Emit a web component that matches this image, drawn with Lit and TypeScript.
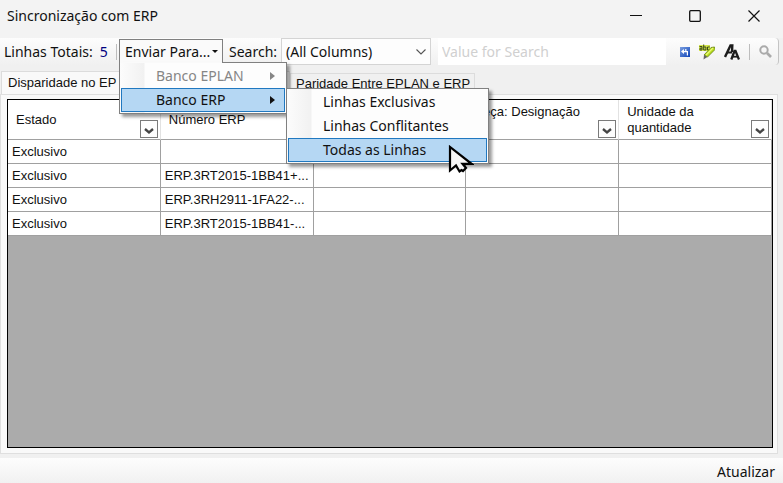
import { LitElement, css, html, svg } from "lit";
import { customElement, state } from "lit/decorators.js";

interface Column {
  label: string;
  top?: boolean;
}

const COLUMNS: Column[] = [
  { label: "Estado" },
  { label: "Número ERP" },
  { label: "" },
  { label: "Peça: Designação", top: true },
  { label: "Unidade da quantidade" },
];

const ROWS: string[][] = [
  ["Exclusivo", "", "", "", ""],
  ["Exclusivo", "ERP.3RT2015-1BB41+...", "", "", ""],
  ["Exclusivo", "ERP.3RH2911-1FA22-...", "", "", ""],
  ["Exclusivo", "ERP.3RT2015-1BB41-...", "", "", ""],
];

const SUBMENU = ["Linhas Exclusivas", "Linhas Conflitantes", "Todas as Linhas"];

const minimizeIcon = svg`<svg width="12" height="12" viewBox="0 0 12 12"><path d="M0 5.5h12" stroke="#111" fill="none"/></svg>`;
const maximizeIcon = svg`<svg width="12" height="12" viewBox="0 0 12 12"><rect x=".7" y=".7" width="10.6" height="10.6" rx="1" stroke="#111" stroke-width="1.3" fill="none"/></svg>`;
const closeIcon = svg`<svg width="12" height="12" viewBox="0 0 12 12"><path d="M.5.5l11 11M11.5.5l-11 11" stroke="#111" stroke-width="1.2" fill="none"/></svg>`;
const chevronIcon = svg`<svg width="10" height="6" viewBox="0 0 10 6"><path d="M1 1l4 3.4L9 1" stroke="#444" stroke-width="2.3" fill="none"/></svg>`;
const comboIcon = svg`<svg class="combo-arrow" width="10" height="6" viewBox="0 0 10 6"><path d="M.5.5L5 5 9.5.5" stroke="#555" stroke-width="1.1" fill="none"/></svg>`;
const backIcon = svg`<svg width="10" height="10" viewBox="0 0 10 10">
  <defs><linearGradient id="b" x1="0" y1="0" x2="1" y2="1"><stop offset="0" stop-color="#7b9fe0"/><stop offset="1" stop-color="#0e43b8"/></linearGradient></defs>
  <rect width="10" height="10" fill="url(#b)"/>
  <path d="M1 4.500L4 2V4H8V8.500H6.800V5.200H4V7zM5.200 2h1.200v2H5.200z" fill="#fff"/></svg>`;
const highlightIcon = svg`<svg width="16" height="16" viewBox="0 0 16 16">
  <rect width="11" height="6" y="1" fill="#d4e64a"/>
  <g fill="none" stroke="#3c4a1a"><path d="M.5 2.500h2.500v3.500H1V4.200h2"/><path d="M4.700 .5v5.500h2.200V3H4.700"/><path d="M10.800 3H8.500v3h2.300"/></g>
  <path d="M5 11l7-7.500 3.500-.5.5 2.500L8.500 13z" fill="#b6dc1c" stroke="#718a1a" stroke-width=".9"/>
  <path d="M7 11l7-7" stroke="#ecf77a" stroke-width="1.200"/>
  <path d="M5 10.800L8.400 13 4.500 15.500z" fill="#666"/></svg>`;
const caseIcon = svg`<svg width="16" height="16" viewBox="0 0 16 16"><g fill="none" stroke="#1c1c1c">
  <path d="M1 13L6.500 1.500h1.800L8 8" stroke-width="2.400"/><path d="M3 8.500h5" stroke-width="2"/>
  <path d="M7.300 15.500L10.500 7h1l3.500 8.500" stroke-width="2.300"/><path d="M9 12.700h5" stroke-width="1.800"/></g></svg>`;
const searchIcon = svg`<svg width="13" height="13" viewBox="0 0 13 13"><circle cx="5" cy="5" r="3.700" stroke="#aaa" stroke-width="2" fill="none"/><path d="M8 8l4 4" stroke="#aaa" stroke-width="2.600" fill="none"/></svg>`;
const cursorIcon = svg`<svg class="cursor" width="26" height="30" viewBox="0 0 26 30"><path d="M2 2V25.500L8 20.500 11.500 26.500 13.500 25 15 26 18 23 14.500 18.800H23.500z" fill="#f7f7f7" stroke="#000" stroke-width="2.200"/></svg>`;

@customElement("app-root")
export class AppRoot extends LitElement {
  static styles = css`
    :host {
      display: flex;
      flex-direction: column;
      min-height: 100vh;
      box-sizing: border-box;
      background: #f0f0f0;
      color: #111;
      font: 14px/20px "Noto Sans", "Open Sans", sans-serif;
    }
    *, *::before { box-sizing: border-box; }
    button, input, select { font: inherit; color: inherit; margin: 0; border-radius: 0; }
    button { padding: 0; border: 0; background: none; }
    svg { display: block; flex: none; }

    .titlebar {
      display: flex;
      align-items: center;
      height: 38px;
      padding: 0 0 6px 7px;
      background: #f3f3f3;
    }
    .title { flex: 1; margin: 0; font: inherit; }
    .caption { display: grid; place-items: center; width: 59px; height: 32px; }

    .toolbar {
      display: flex;
      align-items: center;
      height: 27px;
      margin-right: 4px;
      padding-left: 4px;
      background: linear-gradient(#fdfdfd, #f0f0f0);
      border-right: 1px solid #c4c4c4;
      border-radius: 0 4px 4px 0;
      white-space: nowrap;
    }
    .count { margin: 0 7px; color: #000080; }
    .totals { display: flex; width: 112px; }
    .line { width: 1px; height: 16px; background: #bdbdbd; }
    .send { position: relative; width: 104px; height: 25px; margin-left: 2px; }
    .send-button {
      display: flex;
      align-items: center;
      justify-content: space-between;
      width: 104px;
      height: 24px;
      padding: 0 4px 0 5px;
      border: 1px solid #808080;
      border-bottom: 0;
      background: #fafafa;
    }
    .down { border: 3px solid transparent; border-top-color: #111; border-bottom: 0; }
    .search-label { width: 58px; padding-left: 6px; }
    .combo { position: relative; width: 150px; height: 27px; }
    .combo select {
      appearance: none;
      width: 100%;
      height: 27px;
      padding: 0 0 0 4px;
      border: 1px solid #d4d4d4;
      background: #fdfdfd;
    }
    .combo-arrow { position: absolute; right: 5px; top: 11px; pointer-events: none; }
    .search {
      flex: 1;
      min-width: 0;
      height: 27px;
      margin-left: 7px;
      padding: 0 4px;
      border: 0;
      background: #fff;
    }
    .search::placeholder { color: #d0d0d0; opacity: 1; }
    .tools { display: flex; align-items: center; gap: 9px; padding: 0 6px 0 14px; }

    .menu {
      position: absolute;
      z-index: 2;
      padding: 1px;
      border: 1px solid #808080;
      background: linear-gradient(90deg, #fcfcfc, #f1f1f1 24px, #fdfdfd 25px);
      box-shadow: 3px 3px 3px #0006;
    }
    .menu-main { left: 0; top: 23px; width: 168px; }
    .menu-main::before {
      content: "";
      position: absolute;
      left: 0;
      top: -1px;
      width: 102px;
      height: 1px;
      background: #fafafa;
    }
    .menu-sub { left: 167px; top: 49px; width: 203px; z-index: 3; }
    .item {
      position: relative;
      display: flex;
      align-items: center;
      justify-content: space-between;
      width: 100%;
      height: 24px;
      padding: 0 9px 0 34px;
      border: 1px solid transparent;
    }
    .item.active { border-color: #2078c0; background: #b5d7f3; }
    .item:disabled { color: #868686; }
    .right { border: 4px solid transparent; border-left: 5px solid currentColor; border-right: 0; }
    .cursor { position: absolute; left: 159px; top: 6px; }

    .tabs {
      display: flex;
      align-items: flex-end;
      height: 29px;
      padding-left: 1px;
      font: 13px/16px "Liberation Sans", Arial, sans-serif;
    }
    .tab { height: 21px; padding: 0 4px 0 5px; border: 1px solid #dcdcdc; border-bottom: 0; text-align: left; white-space: nowrap; }
    .tab.selected { width: 289px; height: 23px; background: #f9f9f9; padding: 0 6px; }

    .page {
      display: flex;
      flex: 1;
      margin: 0 5px 4px 0;
      padding: 4px 4px 5px 6px;
      border: 1px solid #dfdfdf;
      background: #f9f9f9;
    }
    .grid { flex: 1; border: 1px solid #000; background: #ababab; }
    table {
      width: 100%;
      table-layout: fixed;
      border-collapse: separate;
      border-spacing: 0;
      font: 13px/16px "Liberation Sans", Arial, sans-serif;
      background: #fff;
    }
    th, td { padding: 0; border-right: 1px solid #a0a0a0; border-bottom: 1px solid #a0a0a0; text-align: left; font-weight: 400; }
    th { border-right-color: #e2e2e2; }
    td { height: 24px; padding: 0 0 0 4px; white-space: nowrap; overflow: hidden; }
    .head { display: flex; align-items: center; height: 39px; padding: 0 2px 0 8px; }
    .head-label { flex: 1; }
    .head-label.top { align-self: flex-start; padding-top: 4px; margin-right: -16px; }
    .filter {
      display: grid;
      place-items: center;
      align-self: flex-end;
      width: 18px;
      height: 18px;
      margin-bottom: 1px;
      padding-top: 3px;
      border: 1px solid #7a7a7a;
      background: #fdfdfd;
    }

    .status {
      display: flex;
      align-items: center;
      justify-content: flex-end;
      height: 25px;
      padding: 2px 8px 0 0;
      background: linear-gradient(#fdfdfd, #f1f1f1);
    }
  `;

  @state() private query = "";

  render() {
    return html`
      <header class="titlebar">
        <h1 class="title">Sincronização com ERP</h1>
        <button class="caption" aria-label="Minimizar">${minimizeIcon}</button>
        <button class="caption" aria-label="Maximizar">${maximizeIcon}</button>
        <button class="caption" aria-label="Fechar">${closeIcon}</button>
      </header>
      <div class="toolbar">
        <div class="totals"><span>Linhas Totais:</span><span class="count">5</span></div>
        <div class="line"></div>
        <div class="send">
          <button class="send-button" aria-haspopup="menu" aria-expanded="true">
            <span>Enviar Para...</span><span class="down"></span>
          </button>
          <div class="menu menu-main" role="menu">
            <button class="item" role="menuitem" disabled>Banco EPLAN<span class="right"></span></button>
            <button class="item active" role="menuitem">Banco ERP<span class="right"></span></button>
          </div>
          <div class="menu menu-sub" role="menu">
            ${SUBMENU.map((label, i) => i === SUBMENU.length - 1
              ? html`<button class="item active" role="menuitem">${label}${cursorIcon}</button>`
              : html`<button class="item" role="menuitem">${label}</button>`)}
          </div>
        </div>
        <label class="search-label" for="columns">Search:</label>
        <div class="combo">
          <select id="columns"><option>(All Columns)</option></select>
          ${comboIcon}
        </div>
        <input class="search" type="text" aria-label="Search value" placeholder="Value for Search"
          .value=${this.query}
          @input=${(e: Event) => { this.query = (e.target as HTMLInputElement).value; }} />
        <div class="tools">
          <button aria-label="Previous">${backIcon}</button>
          <button aria-label="Highlight">${highlightIcon}</button>
          <button aria-label="Match case">${caseIcon}</button>
          <div class="line"></div>
          <button aria-label="Find">${searchIcon}</button>
        </div>
      </div>
      <div class="tabs" role="tablist">
        <button class="tab selected" role="tab" aria-selected="true">Disparidade no EP</button>
        <button class="tab" role="tab" aria-selected="false">Paridade Entre EPLAN e ERP</button>
      </div>
      <main class="page">
        <div class="grid">
          <table>
            <thead><tr>${COLUMNS.map((c) => html`
              <th scope="col"><div class="head">
                <span class="head-label ${c.top ? "top" : ""}">${c.label}</span>
                <button class="filter" aria-label="Filtrar ${c.label}">${chevronIcon}</button>
              </div></th>`)}</tr></thead>
            <tbody>${ROWS.map((r) => html`<tr>${r.map((v) => html`<td>${v}</td>`)}</tr>`)}</tbody>
          </table>
        </div>
      </main>
      <footer class="status"><button>Atualizar</button></footer>
    `;
  }
}
